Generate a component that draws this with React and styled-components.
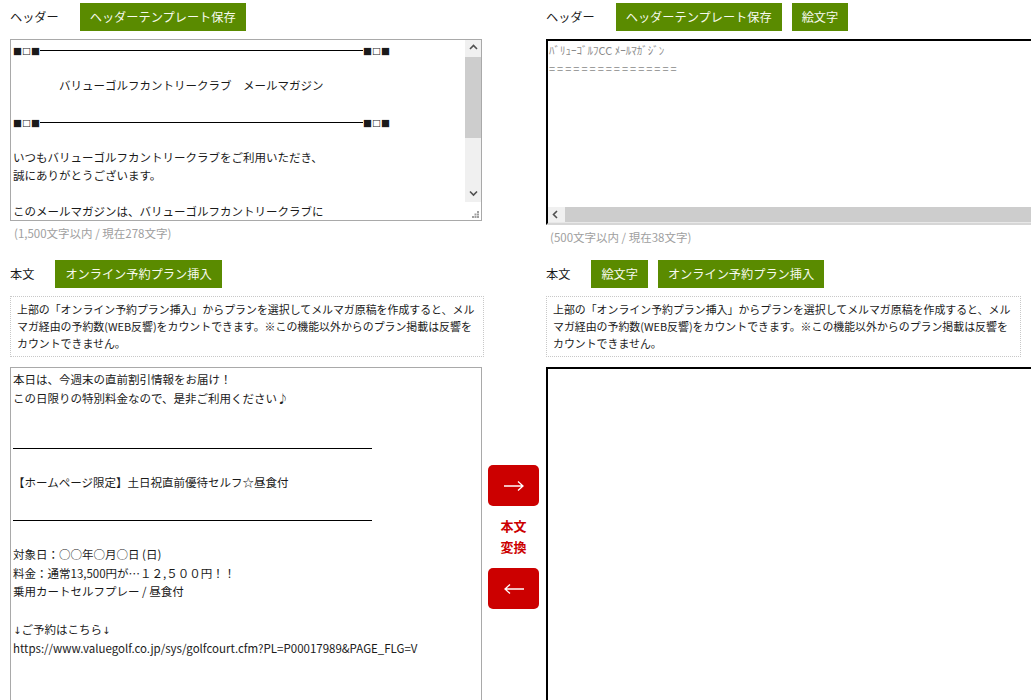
import React from 'react';
import styled, { createGlobalStyle } from 'styled-components';

const GlobalStyle = createGlobalStyle`
  html, body {
    margin: 0;
    padding: 0;
    overflow: hidden;
    background: #ffffff;
    font-family: "Noto Sans CJK JP", "Noto Sans", sans-serif;
    color: #1a1a1a;
  }
`;

const Page = styled.div`
  display: grid;
  grid-template-columns: 474px 62px 485px;
  padding: 3px 0 0 10px;
  align-items: start;
`;

const Section = styled.div`
  display: flex;
  flex-direction: column;
`;

const Toolbar = styled.div`
  display: flex;
  align-items: center;
  gap: 10px;
  height: 28px;
  margin-top: ${(p) => p.$top || 0}px;
`;

const Label = styled.span`
  font-size: 12.2px;
  margin-right: 11px;
`;

const GreenButton = styled.button`
  height: 28px;
  padding: 0 10px;
  border: none;
  border-radius: 0;
  background: #5a8b00;
  color: #f7faef;
  font-family: inherit;
  font-size: 12.2px;
  cursor: pointer;
`;

const Counter = styled.div`
  margin-top: 4px;
  padding-left: 4px;
  height: 16px;
  line-height: 16px;
  font-size: 11.5px;
  color: #a0a0a0;
`;

/* left textareas (light border) */
const PlainBox = styled.div`
  box-sizing: border-box;
  display: flex;
  width: 472px;
  height: ${(p) => p.$h}px;
  margin-top: ${(p) => p.$top || 0}px;
  border: 1px solid #a9a9a9;
  background: #fff;
`;

/* right textareas (dark inset border) */
const InsetBox = styled.div`
  box-sizing: border-box;
  display: flex;
  flex-direction: column;
  width: 500px;
  height: ${(p) => p.$h}px;
  margin-top: ${(p) => p.$top || 0}px;
  border-top: 2px solid #000;
  border-left: 2px solid #000;
  border-bottom: 2px solid #d6d6d6;
  background: #fff;
`;

const TextArea = styled.div`
  flex: 1;
  overflow: hidden;
  padding: ${(p) => p.$pad || '0 2px'};
  font-size: 11.5px;
  line-height: 18px;
  white-space: pre-wrap;
`;

const Line = styled.div`
  height: ${(p) => p.$h || 18}px;
  line-height: ${(p) => p.$h || 18}px;
`;

const Glyph = styled.span`
  font-family: "DejaVu Sans", sans-serif;
  font-size: 10px;
  color: #1a1a1a;
`;

const SmallLine = styled.div`
  height: 18px;
  line-height: 18px;
  font-size: 11px;
  letter-spacing: ${(p) => p.$spacing || 0}px;
  color: #8a8a8a;
`;

const Ornament = styled.div`
  display: flex;
  align-items: center;
  width: 377px;
  height: 18px;
  font-family: "DejaVu Sans", sans-serif;
  font-size: 9.5px;
  line-height: 18px;
  padding-top: 3px;
  box-sizing: border-box;
`;

const OrnamentRule = styled.div`
  flex: 1;
  height: 0;
  border-top: 1.5px solid #000;
`;

const Rule = styled.div`
  width: 359px;
  height: ${(p) => p.$h}px;
  margin-bottom: ${(p) => p.$after}px;
  border-bottom: 1.5px solid #000;
`;

const VScroll = styled.div`
  display: flex;
  flex-direction: column;
  width: 16px;
  background: #f0f0f0;
`;

const ScrollArrow = styled.div`
  display: flex;
  align-items: center;
  justify-content: center;
  width: ${(p) => (p.$w ? `${p.$w}px` : 'auto')};
  height: ${(p) => p.$h || 17}px;
  background: #f0f0f0;
  flex-shrink: 0;
`;

const VThumb = styled.div`
  height: 81px;
  background: #cdcdcd;
`;

const Track = styled.div`
  flex: 1;
`;

const Grip = styled.div`
  display: flex;
  align-items: flex-end;
  justify-content: flex-end;
  height: 16px;
  background: #fff;
  padding: 0 2px 2px 0;
`;

const HScroll = styled.div`
  display: flex;
  height: 15px;
  background: #cdcdcd;
  border-bottom: 1px solid #e8e8e8;
`;

const Notice = styled.div`
  box-sizing: border-box;
  width: ${(p) => p.$w}px;
  margin-top: 8px;
  padding: 4px 4px 4px 6px;
  border: 1px dotted #c8c8c8;
  font-size: 10.92px;
  line-height: 17px;
`;

const Middle = styled.div`
  display: flex;
  flex-direction: column;
  align-items: center;
  padding: 98px 3px 0 0;
  margin-top: 10px;
`;

const RedButton = styled.button`
  display: flex;
  align-items: center;
  justify-content: center;
  width: 51px;
  height: 41px;
  border: none;
  border-radius: 5px;
  background: #cc0000;
  cursor: pointer;
`;

const ConvertText = styled.div`
  margin: 9px 0 11px;
  font-size: 13px;
  line-height: 21px;
  font-weight: bold;
  color: #cc0000;
  text-align: center;
`;

const Chevron = ({ dir }) => {
  const paths = {
    up: 'M1 5L4.5 1.5L8 5',
    down: 'M1 1.5L4.5 5L8 1.5',
    left: 'M5 1L1.5 4.5L5 8',
  };
  return (
    <svg width="9" height="9" viewBox="0 0 9 9">
      <path d={paths[dir]} fill="none" stroke="#505050" strokeWidth="1.6" />
    </svg>
  );
};

const GripIcon = () => (
  <svg width="7" height="7" viewBox="0 0 7 7" fill="#a0a0a0">
    <rect x="5" y="0" width="2" height="2" />
    <rect x="2.5" y="2.5" width="2" height="2" />
    <rect x="5" y="2.5" width="2" height="2" />
    <rect x="0" y="5" width="2" height="2" />
    <rect x="2.5" y="5" width="2" height="2" />
    <rect x="5" y="5" width="2" height="2" />
  </svg>
);

const Arrow = ({ left }) => (
  <svg width="22" height="12" viewBox="0 0 22 12">
    <path
      d={left ? 'M21 6H2 M7 1.5L2 6L7 10.5' : 'M1 6H20 M15 1.5L20 6L15 10.5'}
      fill="none"
      stroke="#fff"
      strokeWidth="1.3"
    />
  </svg>
);

const OrnamentLine = () => (
  <Ornament>
    <span>■□■</span>
    <OrnamentRule />
    <span>■□■</span>
  </Ornament>
);

const noticeText =
  '上部の「オンライン予約プラン挿入」からプランを選択してメルマガ原稿を作成すると、メルマガ経由の予約数(WEB反響)をカウントできます。※この機能以外からのプラン掲載は反響をカウントできません。';

const App = () => {
  return (
    <>
      <GlobalStyle />
      <Page>
        {/* header row */}
        <Section>
          <Toolbar>
            <Label>ヘッダー</Label>
            <GreenButton>ヘッダーテンプレート保存</GreenButton>
          </Toolbar>
          <PlainBox $h={182} $top={8}>
            <TextArea>
              <OrnamentLine />
              <Line />
              <Line>{'　　　　バリューゴルフカントリークラブ　メールマガジン'}</Line>
              <Line />
              <OrnamentLine />
              <Line />
              <Line>いつもバリューゴルフカントリークラブをご利用いただき、</Line>
              <Line>誠にありがとうございます。</Line>
              <Line />
              <Line>このメールマガジンは、バリューゴルフカントリークラブに</Line>
            </TextArea>
            <VScroll>
              <ScrollArrow>
                <Chevron dir="up" />
              </ScrollArrow>
              <VThumb />
              <Track />
              <ScrollArrow $h={16}>
                <Chevron dir="down" />
              </ScrollArrow>
              <Grip>
                <GripIcon />
              </Grip>
            </VScroll>
          </PlainBox>
          <Counter>(1,500文字以内 / 現在278文字)</Counter>
        </Section>
        <div />
        <Section>
          <Toolbar>
            <Label>ヘッダー</Label>
            <GreenButton>ヘッダーテンプレート保存</GreenButton>
            <GreenButton>絵文字</GreenButton>
          </Toolbar>
          <InsetBox $h={186} $top={8}>
            <TextArea $pad="0 0 0 1px">
              <SmallLine>ﾊﾞﾘｭｰｺﾞﾙﾌCC ﾒｰﾙﾏｶﾞｼﾞﾝ</SmallLine>
              <SmallLine $spacing={2}>================</SmallLine>
            </TextArea>
            <HScroll>
              <ScrollArrow $w={17} $h={15}>
                <Chevron dir="left" />
              </ScrollArrow>
            </HScroll>
          </InsetBox>
          <Counter>(500文字以内 / 現在38文字)</Counter>
        </Section>

        {/* body toolbar row */}
        <Toolbar $top={15}>
          <Label>本文</Label>
          <GreenButton>オンライン予約プラン挿入</GreenButton>
        </Toolbar>
        <div />
        <Toolbar $top={15}>
          <Label>本文</Label>
          <GreenButton>絵文字</GreenButton>
          <GreenButton>オンライン予約プラン挿入</GreenButton>
        </Toolbar>

        {/* notice row */}
        <Notice $w={474}>{noticeText}</Notice>
        <div />
        <Notice $w={475}>{noticeText}</Notice>

        {/* body editors */}
        <PlainBox $h={360} $top={10}>
          <TextArea $pad="2px 2px 0">
            <Line $h={18.7}>本日は、今週末の直前割引情報をお届け！</Line>
            <Line $h={18.7}>この日限りの特別料金なので、是非ご利用ください♪</Line>
            <Rule $h={41} $after={24} />
            <Line $h={18.7}>【ホームページ限定】土日祝直前優待セルフ☆昼食付</Line>
            <Rule $h={28} $after={24} />
            <Line $h={18.7}>対象日：○○年○月○日 (日)</Line>
            <Line $h={18.7}>料金：通常13,500円が…１２,５００円！！</Line>
            <Line $h={18.7}>乗用カートセルフプレー / 昼食付</Line>
            <Line $h={18.7} />
            <Line $h={18.7}>
              <Glyph>{'\u2193\uFE0E'}</Glyph>ご予約はこちら<Glyph>{'\u2193\uFE0E'}</Glyph>
            </Line>
            <Line $h={18.7}>https://www.valuegolf.co.jp/sys/golfcourt.cfm?PL=P00017989&amp;PAGE_FLG=V</Line>
          </TextArea>
        </PlainBox>
        <Middle>
          <RedButton aria-label="本文を右へ変換">
            <Arrow />
          </RedButton>
          <ConvertText>
            本文
            <br />
            変換
          </ConvertText>
          <RedButton aria-label="本文を左へ変換">
            <Arrow left />
          </RedButton>
        </Middle>
        <InsetBox $h={360} $top={10} />
      </Page>
    </>
  );
};

export default App;
